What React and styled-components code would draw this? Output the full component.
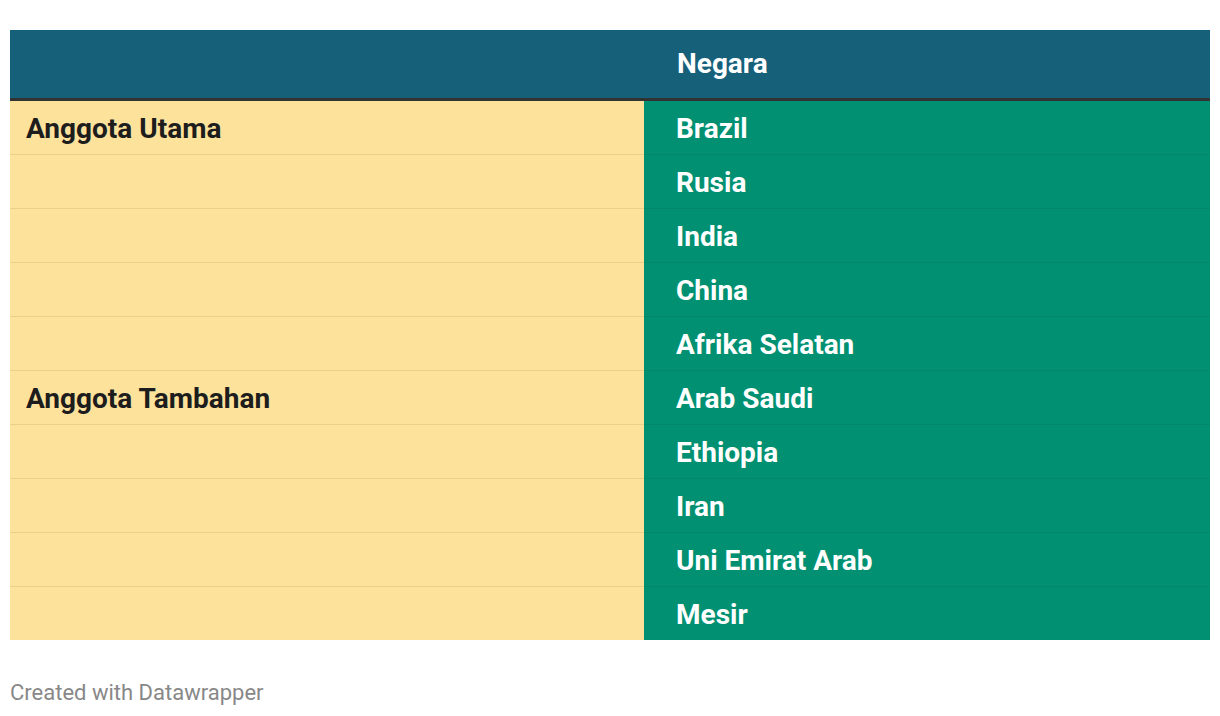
import React from "react";
import styled, { createGlobalStyle } from "styled-components";

const GlobalStyle = createGlobalStyle`
  body {
    margin: 0;
    background: #ffffff;
    font-family: Roboto, "Liberation Sans", sans-serif;
  }
`;

const rows = [
  { group: "Anggota Utama", country: "Brazil" },
  { group: "", country: "Rusia" },
  { group: "", country: "India" },
  { group: "", country: "China" },
  { group: "", country: "Afrika Selatan" },
  { group: "Anggota Tambahan", country: "Arab Saudi" },
  { group: "", country: "Ethiopia" },
  { group: "", country: "Iran" },
  { group: "", country: "Uni Emirat Arab" },
  { group: "", country: "Mesir" }
];

const App = () => {
  return (
    <ElPage>
      <GlobalStyle />
      <ElTable>
        <ElHeader>
          <ElHeadCell />
          <ElHeadCell $right>Negara</ElHeadCell>
        </ElHeader>
        {rows.map((r, i) => (
          <ElRow key={i} $last={i === rows.length - 1}>
            <ElGroupCell $last={i === rows.length - 1}>{r.group}</ElGroupCell>
            <ElCountryCell $last={i === rows.length - 1}>{r.country}</ElCountryCell>
          </ElRow>
        ))}
      </ElTable>
      <ElFooter>Created with Datawrapper</ElFooter>
    </ElPage>
  );
};

const ElPage = styled.div`
  padding: 30px 10px 0;
`;

const ElTable = styled.div`
  display: grid;
  width: 1200px;
`;

const ElHeader = styled.div`
  display: grid;
  grid-template-columns: 634px 566px;
  height: 68px;
  background-color: #17607a;
  border-bottom: 3px solid #333333;
`;

const ElHeadCell = styled.div`
  display: flex;
  align-items: center;
  padding: 0 0 2px ${(p) => (p.$right ? "33px" : "17px")};
  color: #ffffff;
  font-size: 28px;
  font-weight: 700;
`;

const ElRow = styled.div`
  display: grid;
  grid-template-columns: 634px 566px;
  height: ${(p) => (p.$last ? "53px" : "54px")};
`;

const ElGroupCell = styled.div`
  display: flex;
  align-items: center;
  padding-left: 16px;
  padding-top: 2px;
  background-color: #fde29c;
  border-bottom: ${(p) => (p.$last ? "none" : "1px solid #ebd08b")};
  color: #1d1d1d;
  font-size: 28px;
  font-weight: 700;
`;

const ElCountryCell = styled.div`
  display: flex;
  align-items: center;
  padding-left: 32px;
  padding-top: 2px;
  background-color: #019172;
  border-bottom: ${(p) => (p.$last ? "none" : "1px solid #01886a")};
  color: #ffffff;
  font-size: 28px;
  font-weight: 700;
`;

const ElFooter = styled.div`
  margin-top: 40px;
  color: #888888;
  font-size: 22px;
  line-height: 26px;
`;

export default App;
